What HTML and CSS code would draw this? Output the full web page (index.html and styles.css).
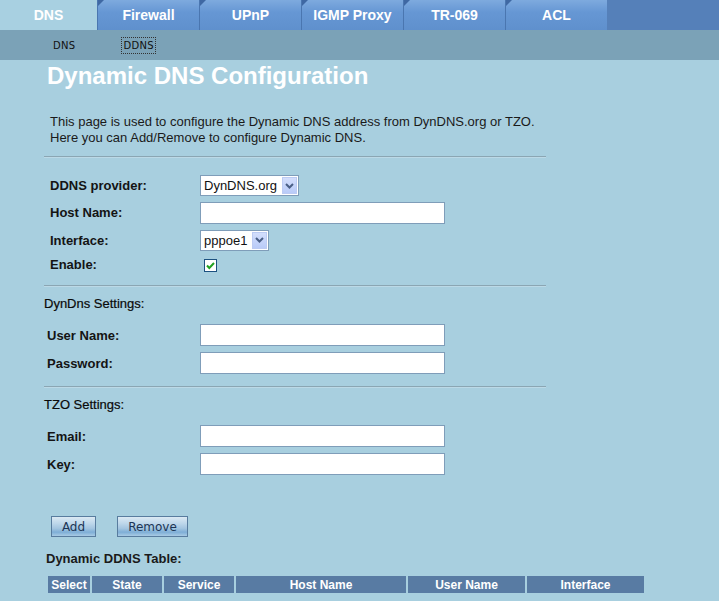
FILE: index.html
```html
<!DOCTYPE html>
<html>

<head>
    <title>Dynamic DNS Configuration</title>
    <link rel="stylesheet" href="styles.css">
</head>

<body>
    <div id="tabBar">
        <div class="tab tabActive">DNS</div>
        <div class="tab">Firewall</div>
        <div class="tab">UPnP</div>
        <div class="tab">IGMP Proxy</div>
        <div class="tab">TR-069</div>
        <div class="tab">ACL</div>
        <div class="tabFill"></div>
    </div>

    <div id="subNav">
        <span class="subItem">DNS</span>
        <span class="subItem subFocus">DDNS</span>
    </div>

    <div id="content">
        <h1 class="title">Dynamic DNS Configuration</h1>

        <p class="intro">
            This page is used to configure the Dynamic DNS address from DynDNS.org or TZO.<br>
            Here you can Add/Remove to configure Dynamic DNS.
        </p>

        <div class="linie"></div>

        <div class="formGrid formMain">
            <label class="eticheta">DDNS provider:</label>
            <div class="selectBox selectProvider">
                <span class="selectText">DynDNS.org</span>
                <span class="selectArrow">
                    <svg width="9" height="6" viewBox="0 0 9 6"><path d="M1 1 L4.5 4.5 L8 1" fill="none" stroke="#4a5f86" stroke-width="2"/></svg>
                </span>
            </div>

            <label class="eticheta">Host Name:</label>
            <input type="text" class="camp">

            <label class="eticheta">Interface:</label>
            <div class="selectBox selectIface">
                <span class="selectText">pppoe1</span>
                <span class="selectArrow">
                    <svg width="9" height="6" viewBox="0 0 9 6"><path d="M1 1 L4.5 4.5 L8 1" fill="none" stroke="#4a5f86" stroke-width="2"/></svg>
                </span>
            </div>

            <label class="eticheta">Enable:</label>
            <span class="bifa">
                <svg width="13" height="13" viewBox="0 0 13 13">
                    <rect x="0.5" y="0.5" width="12" height="12" fill="#fff" stroke="#1c5180"/>
                    <path d="M3 6.5 L5.3 9 L10 4" fill="none" stroke="#21a121" stroke-width="2"/>
                </svg>
            </span>
        </div>

        <div class="linie linie2"></div>

        <div class="sectiune">DynDns Settings:</div>

        <div class="formGrid formSub">
            <label class="eticheta">User Name:</label>
            <input type="text" class="camp">

            <label class="eticheta">Password:</label>
            <input type="password" class="camp">
        </div>

        <div class="linie linie3"></div>

        <div class="sectiune">TZO Settings:</div>

        <div class="formGrid formSub formTzo">
            <label class="eticheta">Email:</label>
            <input type="text" class="camp">

            <label class="eticheta">Key:</label>
            <input type="text" class="camp">
        </div>

        <div class="butoane">
            <button type="button" class="buton butonAdd">Add</button>
            <button type="button" class="buton butonRemove">Remove</button>
        </div>

        <div class="tabelTitlu">Dynamic DDNS Table:</div>

        <table class="tabel">
            <tr>
                <th class="colSelect">Select</th>
                <th class="colState">State</th>
                <th class="colService">Service</th>
                <th class="colHost">Host Name</th>
                <th class="colUser">User Name</th>
                <th class="colIface">Interface</th>
            </tr>
        </table>
    </div>
</body>

</html>
```

FILE: styles.css
```css
html {
    font-family: "Liberation Sans", Arial, sans-serif;
}

body {
    margin: 0px;
    background-color: #a8cfdf;
    color: #141414;
}

#tabBar {
    display: flex;
    height: 30px;
    width: 719px;
}

.tab {
    position: relative;
    width: 102px;
    height: 30px;
    line-height: 30px;
    text-align: center;
    color: #ffffff;
    font-weight: bold;
    font-size: 14px;
    background: linear-gradient(#7eaade, #6697d4 40%, #5f90cd);
    border-left: 1px solid #4a76b0;
    box-sizing: border-box;
}

.tab::before {
    content: "";
    position: absolute;
    left: 0px;
    top: 0px;
    border-top: 6px solid #3f68a3;
    border-right: 6px solid transparent;
}

.tabActive {
    width: 97px;
    border-left: none;
    background: #a8d0e1;
    color: #ffffff;
}

.tabActive::before {
    display: none;
}

.tabFill {
    flex: 1;
    background-color: #5580b9;
}

#subNav {
    display: flex;
    height: 30px;
    align-items: center;
    background-color: #7ba2b7;
    padding-left: 53px;
}

.subItem {
    font-family: "DejaVu Sans", Verdana, sans-serif;
    font-size: 10px;
    color: #111111;
    letter-spacing: 0.3px;
    margin-right: 48px;
    padding: 1px 0px;
}

.subFocus {
    outline: 1px dotted #333333;
    outline-offset: 1px;
}

#content {
    padding-left: 44px;
}

.title {
    margin: 2px 0px 0px 3px;
    font-size: 24px;
    line-height: 28px;
    font-weight: bold;
    color: #ffffff;
}

.intro {
    margin: 24px 0px 0px 6px;
    font-size: 13px;
    line-height: 16px;
    color: #1a1a1a;
}

.linie {
    width: 502px;
    margin-top: 10px;
    height: 0px;
    border-top: 1px solid #8ba6b3;
    border-bottom: 1px solid #bcd9e6;
}

.formGrid {
    display: grid;
    grid-template-columns: 150px 245px;
    align-items: center;
}

.formMain {
    margin-top: 14px;
    padding-left: 6px;
    grid-template-rows: 27px 27px 28px 20px;
}

.formSub {
    margin-top: 9px;
    padding-left: 3px;
    grid-template-columns: 153px 245px;
    grid-auto-rows: 28px;
}

.formTzo {
    margin-top: 9px;
}

.eticheta {
    font-size: 13px;
    font-weight: bold;
    color: #141414;
}

.camp {
    width: 245px;
    height: 22px;
    box-sizing: border-box;
    border: 1px solid #7f9db9;
    background-color: #ffffff;
    margin: 0px;
    padding: 0px 3px;
    font-size: 13px;
}

.selectBox {
    position: relative;
    height: 21px;
    box-sizing: border-box;
    border: 1px solid #7f9db9;
    background-color: #ffffff;
    font-size: 13px;
    line-height: 19px;
    color: #111111;
}

.selectProvider {
    width: 99px;
}

.selectIface {
    width: 69px;
}

.selectText {
    padding-left: 3px;
}

.selectArrow {
    position: absolute;
    right: 1px;
    top: 1px;
    width: 15px;
    height: 17px;
    box-sizing: border-box;
    border: 1px solid #bccbf3;
    background: linear-gradient(#d3defc, #b9cbf8);
    display: flex;
    align-items: center;
    justify-content: center;
}

.bifa {
    display: block;
    height: 13px;
    margin-left: 4px;
}

.linie2 {
    margin-top: 11px;
}

.linie3 {
    margin-top: 9px;
}

.sectiune {
    margin-top: 9px;
    font-size: 13px;
    line-height: 16px;
    color: #0a0a0a;
    -webkit-text-stroke: 0.2px #0a0a0a;
}

.butoane {
    display: flex;
    margin-top: 38px;
    padding-left: 7px;
}

.buton {
    height: 21px;
    box-sizing: border-box;
    border: 1px solid #587c9e;
    background: linear-gradient(#dbe9f3, #bcd6ea 35%, #a3c5e0 60%, #7eaed6 80%, #a9cbe4);
    color: #1c3555;
    font-family: "DejaVu Sans", Tahoma, sans-serif;
    font-size: 12px;
    padding: 0px;
    margin: 0px;
}

.butonAdd {
    width: 45px;
    margin-right: 21px;
}

.butonRemove {
    width: 71px;
}

.tabelTitlu {
    margin-top: 14px;
    padding-left: 2px;
    font-size: 13px;
    line-height: 16px;
    font-weight: bold;
    color: #1a1a1a;
}

.tabel {
    margin-top: 7px;
    margin-left: 2px;
    width: 600px;
    border-spacing: 2px;
    border-collapse: separate;
}

.tabel th {
    height: 17px;
    padding: 0px;
    background-color: #587ba3;
    color: #ffffff;
    font-size: 12px;
    font-weight: bold;
    text-align: center;
}

.colSelect {
    width: 42px;
}

.colState {
    width: 70px;
}

.colService {
    width: 70px;
}

.colHost {
    width: 170px;
}

.colUser {
    width: 117px;
}

.colIface {
    width: 117px;
}
```
